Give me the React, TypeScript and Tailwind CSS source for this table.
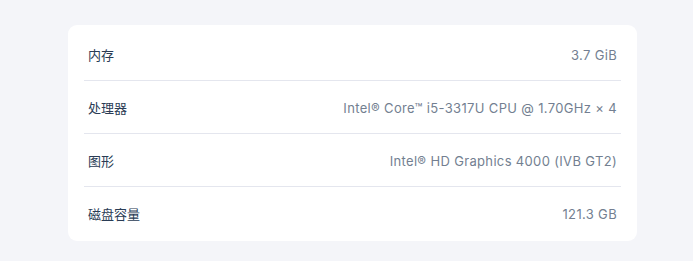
import React from "react";

const rows = [
  { label: "内存", value: "3.7 GiB" },
  { label: "处理器", value: "Intel® Core™ i5-3317U CPU @ 1.70GHz × 4" },
  { label: "图形", value: "Intel® HD Graphics 4000 (IVB GT2)" },
  { label: "磁盘容量", value: "121.3 GB" },
];

export default function App() {
  return (
    <div
      className="w-[693px] h-[261px] bg-[#f4f5f9] pt-[25px] pl-[68px]"
      style={{ fontFamily: 'Inter, "Noto Sans CJK SC", sans-serif' }}
    >
      <div className="w-[569px] h-[216px] bg-white rounded-[9px] px-4 pt-[3px] flex flex-col">
        {rows.map((r, i) => (
          <div
            key={r.label}
            className={
              "h-[53px] flex items-center justify-between px-1 pt-[3px] " +
              (i < rows.length - 1 ? "border-b border-[#e4e6ee]" : "")
            }
          >
            <span className="text-[13px] text-[#2a3c55]">{r.label}</span>
            <span className="text-[13px] tracking-[0.34px] text-[#737f91]">{r.value}</span>
          </div>
        ))}
      </div>
    </div>
  );
}
